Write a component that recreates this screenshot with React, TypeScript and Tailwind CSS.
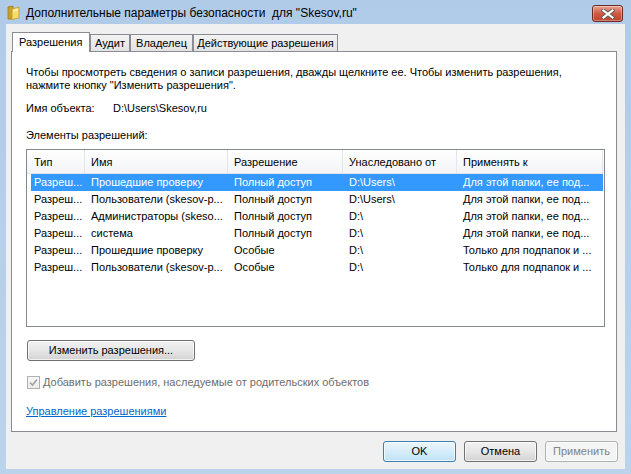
import React from "react";

const rows = [
  ["Разреш...", "Прошедшие проверку", "Полный доступ", "D:\\Users\\", "Для этой папки, ее под..."],
  ["Разреш...", "Пользователи (skesov-p...", "Полный доступ", "D:\\Users\\", "Для этой папки, ее под..."],
  ["Разреш...", "Администраторы (skeso...", "Полный доступ", "D:\\", "Для этой папки, ее под..."],
  ["Разреш...", "система", "Полный доступ", "D:\\", "Для этой папки, ее под..."],
  ["Разреш...", "Прошедшие проверку", "Особые", "D:\\", "Только для подпапок и ..."],
  ["Разреш...", "Пользователи (skesov-p...", "Особые", "D:\\", "Только для подпапок и ..."],
];

function FolderIcon() {
  return (
    <svg width="14" height="15" viewBox="0 0 14 15" className="mt-[5px] shrink-0">
      <path d="M1 2 L6 1 L6 14 L1 14 Z" fill="#c9a227" stroke="#9c7a17" strokeWidth="0.8" />
      <path d="M5 4 L12 2 L12 13 L5 14.5 Z" fill="#f6dc6c" stroke="#c39b22" strokeWidth="0.8" />
      <path d="M6 5 L11 3.6 L11 6 L6 7 Z" fill="#fbeeb0" />
    </svg>
  );
}

function CloseButton() {
  return (
    <div className="mt-[5px] w-[31px] h-[17px] rounded-[3px] border border-[#6b2a24] bg-gradient-to-b from-[#e8a493] via-[#cf5a42] to-[#c0442c] flex items-center justify-center shadow-[inset_0_0_0_1px_rgba(255,255,255,0.35)]">
      <svg width="14" height="10" viewBox="0 0 14 10">
        <path d="M2.5 1.5 L11.5 8.5 M11.5 1.5 L2.5 8.5" stroke="#5a5a5a" strokeWidth="4" strokeLinecap="square" />
        <path d="M2.5 1.5 L11.5 8.5 M11.5 1.5 L2.5 8.5" stroke="#ffffff" strokeWidth="2.2" strokeLinecap="square" />
      </svg>
    </div>
  );
}

function Tab({ label, active, w }: { label: string; active?: boolean; w: string }) {
  if (active) {
    return (
      <div className={`${w} relative z-10 h-[20px] bg-white border border-b-0 border-[#898c95] flex items-center pl-[6px]`}>
        {label}
      </div>
    );
  }
  return (
    <div className={`${w} h-[18px] bg-gradient-to-b from-[#f3f3f3] to-[#e3e3e3] border border-[#898c95] flex items-center justify-center`}>
      {label}
    </div>
  );
}

function Button({
  label,
  w,
  variant = "normal",
}: {
  label: string;
  w: string;
  variant?: "normal" | "default" | "disabled";
}) {
  const styles = {
    normal:
      "border-[#707070] bg-gradient-to-b from-[#f2f2f2] via-[#e6e6e6] to-[#d2d2d2] text-black",
    default:
      "border-[#3c7fb1] bg-gradient-to-b from-[#ecf6fc] via-[#d6edf9] to-[#bfe1f4] text-black",
    disabled: "border-[#adb2b5] bg-[#f4f4f4] text-[#838383]",
  };
  return (
    <div
      className={`${w} h-[21px] rounded-[3px] border ${styles[variant]} flex items-center justify-center shadow-[inset_0_0_0_1px_rgba(255,255,255,0.7)]`}
    >
      {label}
    </div>
  );
}

export default function App() {
  return (
    <div className="w-[631px] h-[474px] bg-gradient-to-b from-[#b0cbe8] to-[#bcd3ec] flex flex-col font-['Liberation_Sans',Arial,sans-serif] text-[11px] text-black">
      <div className="h-[24px] flex items-start pl-[7px] pr-[8px]">
        <FolderIcon />
        <span className="ml-[5px] mt-[5px] text-[12px] leading-[16px] whitespace-pre">
          Дополнительные параметры безопасности  для "Skesov,ru"
        </span>
        <div className="ml-auto">
          <CloseButton />
        </div>
      </div>

      <div className="flex-1 mx-[6px] mb-[5px] bg-[#f0f0f0] flex flex-col">
        <div className="pt-[8px] pl-[5px]">
          <div className="flex items-end h-[20px] pl-[1px]">
            <Tab label="Разрешения" active w="w-[78px]" />
            <Tab label="Аудит" w="w-[40px]" />
            <Tab label="Владелец" w="w-[63px]" />
            <Tab label="Действующие разрешения" w="w-[145px]" />
          </div>
          <div className="-mt-[1px] w-[606px] h-[381px] bg-white border border-[#898c95] flex flex-col pl-[14px]">
            <p className="mt-[14px] leading-[13px] whitespace-nowrap">
              Чтобы просмотреть сведения о записи разрешения, дважды щелкните ее. Чтобы изменить разрешения,
              <br />
              нажмите кнопку "Изменить разрешения".
            </p>
            <div className="mt-[10px] h-[13px] leading-[13px] flex">
              <span className="w-[87px]">Имя объекта:</span>
              <span>D:\Users\Skesov,ru</span>
            </div>
            <div className="mt-[14px] h-[13px] leading-[13px]">Элементы разрешений:</div>

            <div className="mt-[7px] w-[579px] h-[178px] border border-[#828790] bg-white flex flex-col">
              <div className="h-[24px] flex bg-gradient-to-b from-[#ffffff] to-[#f3f4f6] border-b border-[#e5e5e5]">
                <div className="w-[58px] pl-[7px] pt-[2px] flex items-center border-r border-[#e3e5e8]">Тип</div>
                <div className="w-[143px] pl-[6px] pt-[2px] flex items-center border-r border-[#e3e5e8]">Имя</div>
                <div className="w-[115px] pl-[6px] pt-[2px] flex items-center border-r border-[#e3e5e8]">Разрешение</div>
                <div className="w-[114px] pl-[6px] pt-[2px] flex items-center border-r border-[#e3e5e8]">Унаследовано от</div>
                <div className="w-[146px] pl-[6px] pt-[2px] flex items-center border-r border-[#e3e5e8]">Применять к</div>
              </div>
              <div className="flex flex-col pl-[4px]">
                {rows.map((r, i) => (
                  <div
                    key={i}
                    className={`h-[17px] w-[572px] flex items-center whitespace-nowrap ${
                      i === 0 ? "bg-[#3399ff] text-white" : ""
                    }`}
                  >
                    <div className="w-[54px] pl-[3px] overflow-hidden">{r[0]}</div>
                    <div className="w-[143px] pl-[6px] overflow-hidden">{r[1]}</div>
                    <div className="w-[115px] pl-[6px] overflow-hidden">{r[2]}</div>
                    <div className="w-[114px] pl-[6px] overflow-hidden">{r[3]}</div>
                    <div className="w-[146px] pl-[6px] overflow-hidden">{r[4]}</div>
                  </div>
                ))}
              </div>
            </div>

            <div className="mt-[13px] ml-[1px]">
              <Button label="Изменить разрешения..." w="w-[168px]" />
            </div>

            <div className="mt-[15px] ml-[1px] flex items-center h-[13px]">
              <div className="w-[13px] h-[13px] border border-[#b1b1b1] bg-gradient-to-b from-[#f7f7f7] to-[#ececec] flex items-center justify-center">
                <svg width="9" height="9" viewBox="0 0 9 9">
                  <path d="M1 4.5 L3.5 7 L8 1.5" fill="none" stroke="#a2a2a2" strokeWidth="1.6" />
                </svg>
              </div>
              <span className="ml-[3px] text-[#6d6d6d]">Добавить разрешения, наследуемые от родительских объектов</span>
            </div>

            <div className="mt-[16px] h-[13px] leading-[13px]">
              <span className="text-[#0066cc] underline">Управление разрешениями</span>
            </div>
          </div>
        </div>

        <div className="mt-[9px] pr-[7px] flex justify-end gap-[8px]">
          <Button label="OK" w="w-[73px]" variant="default" />
          <Button label="Отмена" w="w-[73px]" />
          <Button label="Применить" w="w-[73px]" variant="disabled" />
        </div>
      </div>
    </div>
  );
}
